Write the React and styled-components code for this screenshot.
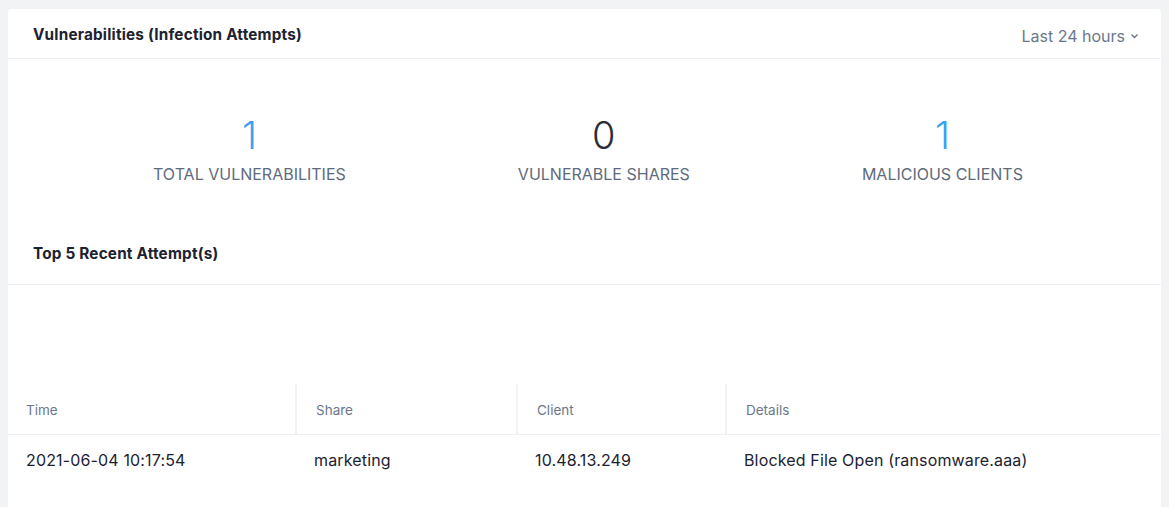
import React from 'react'
import styled, { createGlobalStyle } from 'styled-components'

const GlobalStyle = createGlobalStyle`
  html, body {
    margin: 0;
    padding: 0;
    background: #f2f3f5;
    font-family: Inter, "Open Sans", sans-serif;
  }
`

const stats = [
  { value: '1', label: 'Total Vulnerabilities', accent: true },
  { value: '0', label: 'Vulnerable Shares', accent: false },
  { value: '1', label: 'Malicious Clients', accent: true },
]

const columns = ['Time', 'Share', 'Client', 'Details']
const widths = '287px 221px 209px 1fr'

const rows = [
  ['2021-06-04 10:17:54', 'marketing', '10.48.13.249', 'Blocked File Open (ransomware.aaa)'],
]

function App() {
  return (
    <Page>
      <GlobalStyle />
      <Card>
        <Header>
          <Title>Vulnerabilities (Infection Attempts)</Title>
          <RangePicker>
            Last 24 hours
            <svg width="9" height="6" viewBox="0 0 9 6">
              <path d="M1.5 1.5 L4.5 4.5 L7.5 1.5" fill="none" stroke="#6b7789" strokeWidth="1.4" />
            </svg>
          </RangePicker>
        </Header>

        <StatsRow>
          {stats.map((s) => (
            <Stat key={s.label}>
              <StatValue accent={s.accent}>{s.value}</StatValue>
              <StatLabel>{s.label}</StatLabel>
            </Stat>
          ))}
        </StatsRow>

        <SectionHeader>
          <Title>Top 5 Recent Attempt(s)</Title>
        </SectionHeader>

        <EmptyArea />

        <Table>
          <HeadRow>
            {columns.map((c, i) => (
              <HeadCell key={c} divider={i > 0}>{c}</HeadCell>
            ))}
          </HeadRow>
          {rows.map((r) => (
            <BodyRow key={r[0]}>
              {r.map((cell, i) => (
                <BodyCell key={i}>{cell}</BodyCell>
              ))}
            </BodyRow>
          ))}
        </Table>
      </Card>
    </Page>
  )
}

const Page = styled.div`
  padding: 9px 8px 0 8px;
  height: 507px;
  box-sizing: border-box;
  overflow: hidden;
`

const Card = styled.div`
  background: #fff;
  border-radius: 4px;
  min-height: 560px;
`

const Header = styled.div`
  height: 49px;
  display: flex;
  align-items: center;
  justify-content: space-between;
  padding: 0 25px;
  border-bottom: 1px solid #eef0f3;
`

const Title = styled.div`
  font-size: 15.3px;
  font-weight: 700;
  letter-spacing: 0.2px;
  color: #1c2230;
  margin-top: 1px;
`

const RangePicker = styled.div`
  display: flex;
  align-items: center;
  gap: 5px;
  font-size: 16px;
  color: #6b7789;
  margin-top: 4px;
  margin-right: -3px;
`

const StatsRow = styled.div`
  display: flex;
  justify-content: space-around;
  padding: 53px 52px 0 59px;
  height: 140px;
  box-sizing: border-box;
`

const Stat = styled.div`
  display: flex;
  flex-direction: column;
  align-items: center;
`

const StatValue = styled.div`
  font-size: 38px;
  font-weight: 300;
  line-height: 46px;
  color: ${(p) => (p.accent ? '#3d9ff2' : '#2a2e36')};
`

const StatLabel = styled.div`
  margin-top: 6px;
  font-size: 16px;
  text-transform: uppercase;
  color: #5f6a7b;
`

const SectionHeader = styled.div`
  height: 86px;
  display: flex;
  align-items: center;
  padding: 0 25px;
  border-bottom: 1px solid #eef0f3;
  box-sizing: border-box;
  padding-top: 22px;
`

const EmptyArea = styled.div`
  height: 99px;
`

const Table = styled.div`
  display: flex;
  flex-direction: column;
`

const HeadRow = styled.div`
  display: grid;
  grid-template-columns: ${widths};
  height: 50px;
  border-bottom: 1px solid #eef0f3;
`

const HeadCell = styled.div`
  display: flex;
  align-items: center;
  padding: 0 19px;
  padding-top: 2px;
  font-size: 13.5px;
  color: #6b7789;
  border-left: ${(p) => (p.divider ? '2px solid #f2f3f5' : 'none')};
  &:first-child {
    padding-left: 18px;
  }
`

const BodyRow = styled.div`
  display: grid;
  grid-template-columns: ${widths};
  height: 50px;
`

const BodyCell = styled.div`
  display: flex;
  align-items: center;
  padding: 0 19px;
  font-size: 16px;
  letter-spacing: 0.15px;
  color: #1c2230;
  &:first-child {
    padding-left: 18px;
  }
`

export default App
